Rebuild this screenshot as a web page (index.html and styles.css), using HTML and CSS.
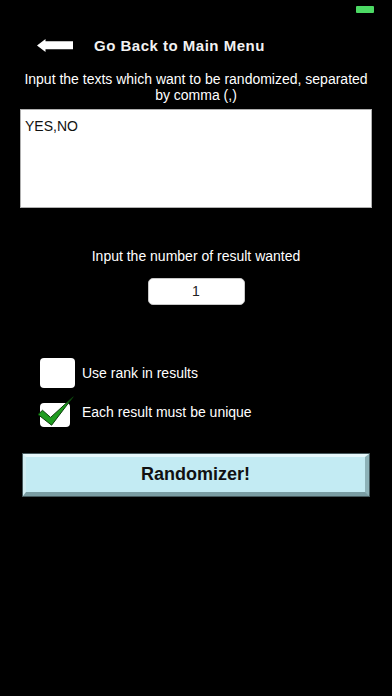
FILE: index.html
```html
<!DOCTYPE html>
<html>
<head>
<meta charset="utf-8">
<link rel="stylesheet" href="styles.css">
</head>
<body>
<div class="status"><div class="battery"></div></div>
<div class="header">
  <svg class="back-arrow" width="36" height="13" viewBox="0 0 36 13">
    <polygon points="0,6.5 8.5,0 8.5,2.2 36,2.2 36,10.3 8.5,10.3 8.5,13" fill="#fff"/>
  </svg>
  <span class="title">Go Back to Main Menu</span>
</div>
<p class="desc">Input the texts which want to be randomized, separated by comma (,)</p>
<div class="textbox">YES,NO</div>
<p class="count-label">Input the number of result wanted</p>
<div class="count-box">1</div>
<div class="options">
  <div class="row row-one">
    <div class="box-cell"><div class="check check-big"></div></div>
    <span class="label">Use rank in results</span>
  </div>
  <div class="row row-two">
    <div class="box-cell">
      <div class="check check-small"></div>
      <svg class="tick" width="40" height="34" viewBox="0 0 40 34">
        <polygon points="2,20.5 6.5,16.3 14.6,23.4 37.2,2.8 15.6,31.2" fill="#1f9c1f" stroke="#0b3d0b" stroke-width="1" stroke-linejoin="round"/>
      </svg>
    </div>
    <span class="label label-two">Each result must be unique</span>
  </div>
</div>
<div class="button">Randomizer!</div>
</body>
</html>
```

FILE: styles.css
```css
html, body {
  margin: 0;
  padding: 0;
  background: #000;
}
body {
  width: 392px;
  height: 696px;
  overflow: hidden;
  color: #fff;
  font-family: "Liberation Sans", Arial, sans-serif;
  font-size: 14px;
}
.status {
  height: 20px;
  display: flex;
  justify-content: flex-end;
  padding-right: 18px;
}
.battery {
  width: 18px;
  height: 7px;
  margin-top: 6px;
  background: #4cd964;
  border-radius: 1px;
}
.header {
  display: flex;
  align-items: center;
  height: 20px;
  margin-top: 15px;
  padding-left: 37px;
}
.back-arrow {
  display: block;
  flex: none;
}
.title {
  margin-left: 21px;
  font-weight: bold;
  font-size: 15px;
  letter-spacing: 0.5px;
  color: #f2f2f2;
}
.desc {
  margin: 16px 0 0;
  padding: 0 18px;
  line-height: 16px;
  text-align: center;
}
.textbox {
  margin: 6px 20px 0;
  height: 99px;
  box-sizing: border-box;
  border: 1px solid #b0b0b0;
  background: #fff;
  color: #111;
  padding: 8px 4px;
  line-height: 16px;
}
.count-label {
  margin: 40px 0 0;
  line-height: 16px;
  text-align: center;
}
.count-box {
  margin: 14px auto 0;
  width: 97px;
  height: 27px;
  box-sizing: border-box;
  border: 1px solid #c8c8c8;
  border-radius: 5px;
  background: #fff;
  color: #222;
  text-align: center;
  line-height: 25px;
}
.options {
  margin-top: 53px;
  padding-left: 40px;
}
.row {
  display: flex;
}
.row-one {
  align-items: center;
}
.row-two {
  margin-top: 15px;
  align-items: flex-start;
}
.box-cell {
  position: relative;
  width: 42px;
  flex: none;
}
.check {
  background: #fff;
  border-radius: 4px;
}
.check-big {
  width: 35px;
  height: 30px;
}
.check-small {
  width: 30px;
  height: 24px;
}
.tick {
  position: absolute;
  left: -4px;
  top: -9px;
}
.label {
  line-height: 16px;
}
.label-two {
  margin-top: 1px;
}
.button {
  margin: 27px 23px 0;
  height: 42px;
  box-sizing: border-box;
  border-style: solid;
  border-width: 3px 4px 4px 3px;
  border-color: #e6f8fb #8db2b8 #7a9da3 #d2eef3;
  box-shadow: 0 0 0 1px #45585c;
  background: #c3ebf3;
  color: #111;
  font-weight: bold;
  font-size: 18px;
  display: flex;
  align-items: center;
  justify-content: center;
}
```
